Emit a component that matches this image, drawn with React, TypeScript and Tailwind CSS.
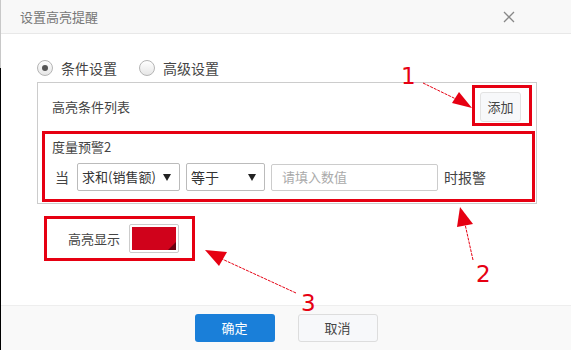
import React from "react";

const RED = "#e60012";

function Radio({ checked, label }: { checked?: boolean; label: string }) {
  return (
    <label className="flex items-center gap-[8px]">
      <span className="flex h-[16px] w-[16px] items-center justify-center rounded-full border border-[#b5b5b5] bg-linear-to-b from-white to-[#e6e6e6]">
        {checked ? <span className="h-[6px] w-[6px] rounded-full bg-[#555]" /> : null}
      </span>
      <span className="text-[14px] text-[#444]">{label}</span>
    </label>
  );
}

function Caret() {
  return (
    <svg width="8" height="7" viewBox="0 0 8 7" className="shrink-0">
      <path d="M0 0 H8 L4 7 Z" fill="#222" />
    </svg>
  );
}

function Annotations() {
  return (
    <svg
      width="571"
      height="350"
      viewBox="0 0 571 350"
      className="pointer-events-none absolute inset-0"
    >
      <g stroke={RED} strokeWidth="1" strokeDasharray="3 1" fill="none">
        <line x1="423" y1="83" x2="458" y2="100" />
        <line x1="473" y1="260" x2="465" y2="224" />
        <line x1="296" y1="293" x2="222" y2="259" />
      </g>
      <g fill={RED}>
        <polygon points="472,108 452,103 459,92" />
        <polygon points="460,207 457,227 473,224" />
        <polygon points="205,250 227,252 219,266" />
      </g>
      <g
        fill={RED}
        fontFamily="'DejaVu Sans', sans-serif"
        fontSize="23"
      >
        <text x="401" y="84">1</text>
        <text x="476" y="282">2</text>
        <text x="301" y="311">3</text>
      </g>
    </svg>
  );
}

export default function App() {
  return (
    <div className="relative flex h-[350px] w-[571px] overflow-hidden bg-white font-['Noto_Sans_CJK_SC','Liberation_Sans',sans-serif]">
      <div className="flex w-px flex-col">
        <div className="h-[68px] bg-[#c8c8c8]" />
        <div className="flex-1 bg-black" />
      </div>

      <div className="flex flex-1 flex-col">
        <div className="flex h-[34px] items-center justify-between border-b border-[#e8e8e8] bg-[#f8f8f8] pl-[19px] pr-[56px]">
          <span className="text-[13px] text-[#777]">设置高亮提醒</span>
          <svg width="12" height="12" viewBox="0 0 12 12">
            <path d="M1 1 L11 11 M11 1 L1 11" stroke="#888" strokeWidth="1.3" />
          </svg>
        </div>

        <div className="flex flex-1 flex-col pl-[36px]">
          <div className="mt-[26px] flex h-[16px] items-center gap-[22px]">
            <Radio checked label="条件设置" />
            <Radio label="高级设置" />
          </div>

          <div className="mt-[6px] w-[500px] border border-[#cccccc] pb-[1px] pl-[4px] pr-[1px] pt-[2px]">
            <div className="flex items-center justify-between pr-[3px]">
              <span className="ml-[10px] mt-[2px] text-[13px] text-[#444]">高亮条件列表</span>
              <div className="border-[3px] pb-[1px] pl-[5px] pr-[8px] pt-[4px] border-[#e60012]">
                <button className="flex h-[30px] w-[41px] items-center justify-center rounded-[3px] border border-[#e3e3e3] bg-[#f7f8fa] text-[13px] text-[#444]">
                  添加
                </button>
              </div>
            </div>

            <div className="mt-[5px] border-[3px] border-[#e60012] pb-[8px] pl-[7px] pt-[3px]">
              <div className="text-[13px] leading-[20px] text-[#444]">度量预警2</div>
              <div className="mt-[6px] flex items-center">
                <span className="ml-[3px] w-[22px] text-[14px] text-[#444]">当</span>
                <div className="flex h-[28px] w-[103px] items-center justify-between rounded-[2px] border border-[#bbbbbb] pl-[4px] pr-[8px]">
                  <span className="text-[13px] text-[#333]">求和(销售额)</span>
                  <Caret />
                </div>
                <div className="ml-[6px] flex h-[28px] w-[79px] items-center justify-between rounded-[2px] border border-[#bbbbbb] pl-[4px] pr-[8px]">
                  <span className="text-[14px] text-[#333]">等于</span>
                  <Caret />
                </div>
                <div className="ml-[6px] flex h-[27px] w-[167px] items-center rounded-[2px] border border-[#cccccc] pl-[10px]">
                  <span className="text-[13px] text-[#aaaaaa]">请填入数值</span>
                </div>
                <span className="ml-[6px] text-[14px] text-[#444]">时报警</span>
              </div>
            </div>
          </div>

          <div className="ml-[7px] mt-[12px] flex h-[45px] w-[151px] items-center border-[3px] border-[#e60012] pl-[21px]">
            <span className="text-[13px] text-[#444]">高亮显示</span>
            <div className="ml-[9px] h-[29px] w-[50px] rounded-[2px] border border-[#cccccc] bg-white p-[2px]">
              <div className="relative h-full w-full overflow-hidden bg-[#d0021b]">
                <svg width="8" height="8" viewBox="0 0 8 8" className="absolute bottom-0 right-0">
                  <path d="M8 0 V8 H0 Z" fill="#6a0010" />
                </svg>
              </div>
            </div>
          </div>
        </div>

        <div className="flex h-[45px] items-center justify-center gap-[23px] border-t border-[#eeeeee] bg-[#f9f9f9]">
          <button className="flex h-[28px] w-[80px] items-center justify-center rounded-[3px] bg-[#1a7fd9] text-[13px] text-white">
            确定
          </button>
          <button className="flex h-[28px] w-[80px] items-center justify-center rounded-[3px] border border-[#dddddd] bg-[#f7f8fa] text-[13px] text-[#444]">
            取消
          </button>
        </div>
      </div>

      <Annotations />
    </div>
  );
}
